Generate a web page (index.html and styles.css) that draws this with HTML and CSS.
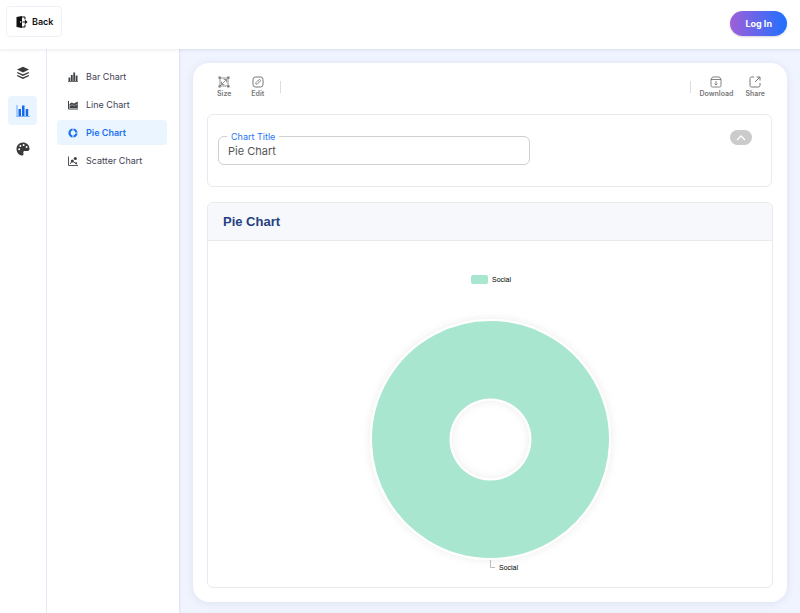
FILE: index.html
```html
<!DOCTYPE html>
<html lang="en">
<head>
    <meta charset="UTF-8">
    <meta name="viewport" content="width=device-width, initial-scale=1.0">
    <title>Pie Chart</title>
    <link rel="stylesheet" href="styles.css">
</head>
<body>
    <header class="topbar">
        <button type="button" class="back-btn">
            <svg width="12" height="12" viewBox="0 0 12 12">
                <path d="M0.500 1 L6 0 V12 L0.500 11 Z" fill="#111"/>
                <path d="M6 1 H9 V3.500 M9 8.500 V11 H6" fill="none" stroke="#111"/>
                <path d="M6.500 6 H10.500 M9 4.300 L10.700 6 L9 7.700" fill="none" stroke="#111" stroke-width="1.200"/>
                <circle cx="4.600" cy="6" r="0.700" fill="#fff"/>
            </svg>
            Back
        </button>
        <button type="button" class="login-btn">Log In</button>
    </header>

    <div class="layout">
        <nav class="rail" aria-label="Sections">
            <button type="button" class="rail-btn" aria-label="Data">
                <svg width="14" height="14" viewBox="0 0 14 14">
                    <path d="M7 0.800 L13 3.600 L7 6.400 L1 3.600 Z" fill="#3a3a3a"/>
                    <path d="M1.200 6.500 L7 9.200 L12.800 6.500 M1.200 9.500 L7 12.200 L12.800 9.500" fill="none" stroke="#3a3a3a" stroke-width="1.300"/>
                </svg>
            </button>
            <button type="button" class="rail-btn active" aria-label="Charts">
                <svg width="14" height="14" viewBox="0 0 14 14">
                    <path d="M1 1 V12.500 H14" fill="none" stroke="#7db4fb" stroke-width="1.200"/>
                    <path d="M2.500 5 H5 V12 H2.500 Z M6 1.500 H8.500 V12 H6 Z M9.700 5 H12.200 V12 H9.700 Z" fill="#1669e8"/>
                </svg>
            </button>
            <button type="button" class="rail-btn" aria-label="Theme">
                <svg width="14" height="14" viewBox="0 0 14 14">
                    <path d="M7 0.500 C3 0.500 0.500 3.500 0.500 7 C0.500 10.800 3.300 13.500 6.300 13.500 C8.200 13.500 7.300 11.500 7.300 10.300 C7.300 9.200 8.200 8.800 9.300 8.900 L11.500 9 C13 9 13.500 7.800 13.500 6.500 C13.300 3 10.500 0.500 7 0.500 Z" fill="#3a3a3a"/>
                    <circle cx="3.200" cy="7.300" r="1" fill="#fff"/>
                    <circle cx="4.400" cy="4.100" r="1" fill="#fff"/>
                    <circle cx="7.600" cy="2.900" r="1" fill="#fff"/>
                    <circle cx="10.600" cy="4.900" r="1" fill="#fff"/>
                </svg>
            </button>
        </nav>

        <nav class="menu" aria-label="Chart types">
            <a href="#bar" class="menu-item">
                <svg width="10" height="10" viewBox="0 0 10 10">
                    <path d="M0.500 5.500 H2.300 V9 H0.500 Z M2.900 3 H4.700 V9 H2.900 Z M5.300 0.500 H7.100 V9 H5.300 Z M7.700 3.500 H9.500 V9 H7.700 Z M0 9.300 H10 V10 H0 Z" fill="#3f4247"/>
                </svg>
                Bar Chart
            </a>
            <a href="#line" class="menu-item">
                <svg width="10" height="10" viewBox="0 0 10 10">
                    <path d="M0.500 1 V9 H10" fill="none" stroke="#3f4247"/>
                    <path d="M1.500 4 L3.500 2.500 L6 3.500 L9.800 1.500 V8 H1.500 Z" fill="#3f4247"/>
                    <path d="M1.500 6 L4 4.700 L6.500 5.700 L9.500 4" fill="none" stroke="#ccc" stroke-width="0.600"/>
                </svg>
                Line Chart
            </a>
            <a href="#pie" class="menu-item active" aria-current="page">
                <svg width="10" height="10" viewBox="0 0 10 10">
                    <circle cx="5" cy="5" r="3.500" fill="none" stroke="#1a73f0" stroke-width="2.200"/>
                    <path d="M5 0 V3 M5 7 V10 M7 5 H10" fill="none" stroke="#ebf5ff" stroke-width="0.900"/>
                </svg>
                Pie Chart
            </a>
            <a href="#scatter" class="menu-item">
                <svg width="10" height="10" viewBox="0 0 10 10">
                    <path d="M0.500 0.500 V9.500 H10 M2 8 L4.500 5 L8.500 8" fill="none" stroke="#3f4247" stroke-width="0.900"/>
                    <circle cx="4.300" cy="5" r="1.500" fill="#3f4247"/>
                    <circle cx="7.300" cy="2.500" r="1.600" fill="#3f4247"/>
                    <circle cx="8.200" cy="7.300" r="1" fill="#3f4247"/>
                </svg>
                Scatter Chart
            </a>
        </nav>

        <main class="workspace">
            <section class="card">
                <div class="toolbar">
                    <div class="tool-group">
                        <button type="button" class="tool">
                            <svg width="12" height="12" viewBox="0 0 12 12" fill="none" stroke="#777">
                                <path d="M2 2 H10 V10 H2 Z M3.500 8.500 L8.500 3.500 M5.700 3.500 H8.500 V6.300 M3.500 5.700 V8.500 H6.300" stroke-width="0.800"/>
                                <path d="M0.500 0.500 H2.700 V2.700 H0.500 Z M9.300 0.500 H11.500 V2.700 H9.300 Z M0.500 9.300 H2.700 V11.500 H0.500 Z M9.300 9.300 H11.500 V11.500 H9.300 Z" fill="#777" stroke="none"/>
                            </svg>
                            Size
                        </button>
                        <button type="button" class="tool">
                            <svg width="12" height="12" viewBox="0 0 12 12" fill="none" stroke="#777">
                                <rect x="1" y="1" width="10" height="10" rx="2.500"/>
                                <path d="M3.800 8.200 L4 6.500 L6.800 3.700 Q7.600 3.200 8.200 3.800 Q8.800 4.400 8.200 5.200 L5.400 8 Z M6.200 4.500 L7.500 5.800" stroke-width="0.800"/>
                            </svg>
                            Edit
                        </button>
                    </div>
                    <span class="divider"></span>
                    <span class="spacer"></span>
                    <span class="divider"></span>
                    <div class="tool-group tool-group-end">
                        <button type="button" class="tool">
                            <svg width="12" height="12" viewBox="0 0 12 12" fill="none" stroke="#777">
                                <path d="M1 3.500 L2.500 1 H9.500 L11 3.500 V9.500 Q11 11 9.500 11 H2.500 Q1 11 1 9.500 Z M1 3.500 H11" stroke-width="0.900"/>
                                <path d="M6 5 V9 M4.500 7.600 L6 9.100 L7.500 7.600" stroke-width="0.900"/>
                            </svg>
                            Download
                        </button>
                        <button type="button" class="tool">
                            <svg width="12" height="12" viewBox="0 0 12 12" fill="none" stroke="#777">
                                <path d="M5 1 H2.500 Q1 1 1 2.500 V9.500 Q1 11 2.500 11 H9.500 Q11 11 11 9.500 V7 M6 6 L11 1 M7.500 1 H11 V4.500"/>
                            </svg>
                            Share
                        </button>
                    </div>
                </div>

                <div class="settings">
                    <div class="field">
                        <label for="chart-title">Chart Title</label>
                        <input type="text" id="chart-title" value="Pie Chart">
                    </div>
                    <button type="button" class="collapse-btn" aria-label="Collapse settings">
                        <svg width="10" height="6" viewBox="0 0 10 6">
                            <path d="M1 5 L5 1 L9 5" fill="none" stroke="#fff" stroke-width="1.400"/>
                        </svg>
                    </button>
                </div>

                <div class="chart-panel">
                    <h1>Pie Chart</h1>
                    <svg class="chart" viewBox="0 0 300 346" role="img" aria-label="Pie chart with one slice, Social">
                        <defs>
                            <filter id="shade" x="-10%" y="-10%" width="120%" height="120%">
                                <feDropShadow dx="0" dy="0" stdDeviation="4" flood-color="#000" flood-opacity="0.080"/>
                            </filter>
                        </defs>
                        <rect x="131" y="34" width="17" height="9" rx="2" fill="#a8e6cf"/>
                        <text x="152" y="41">Social</text>
                        <path d="M150.500 79 a119.500 119.500 0 1 0 0.010 0 Z M150.500 158.500 a40 40 0 1 1 -0.010 0 Z" fill="#a8e6cf" fill-rule="evenodd" stroke="#fff" stroke-width="2" filter="url(#shade)"/>
                        <path d="M150.500 319 V326.500 H155" fill="none" stroke="#bbb"/>
                        <text x="159" y="329">Social</text>
                    </svg>
                </div>
            </section>
        </main>
    </div>
</body>
</html>
```

FILE: styles.css
```css
* {
    box-sizing: border-box;
}
body {
    margin: 0;
    min-height: 100vh;
    display: flex;
    flex-direction: column;
    font-family: Inter, sans-serif;
    font-size: 9px;
    color: #3f4254;
    background-color: #fff;
}
button {
    padding: 0;
    border: 0;
    background: none;
    font: inherit;
    color: inherit;
    cursor: pointer;
}
svg {
    display: block;
    flex-shrink: 0;
}

/* header */
.topbar {
    position: relative;
    display: flex;
    align-items: flex-start;
    justify-content: space-between;
    padding: 6px 13px 12px 6px;
    box-shadow: 0 1px 3px rgba(40, 50, 90, 0.1);
}
.back-btn {
    display: flex;
    align-items: center;
    gap: 4px;
    height: 31px;
    padding: 0 8px 0 9px;
    border: 1px solid #eef1f8;
    border-radius: 4px;
    font-weight: 600;
    color: #111;
}
.login-btn {
    height: 25px;
    margin-top: 5px;
    padding: 0 15px;
    border-radius: 13px;
    background: linear-gradient(90deg, #a05fd8, #1f70ff);
    box-shadow: 0 1px 2px rgba(40, 50, 90, 0.2);
    font-weight: 700;
    color: #fff;
}

.layout {
    flex: 1;
    display: flex;
}

/* icon rail */
.rail {
    display: flex;
    flex-direction: column;
    gap: 9px;
    padding: 9px 9px 9px 8px;
    border-right: 1px solid #e3e9f7;
}
.rail-btn {
    display: flex;
    align-items: center;
    justify-content: center;
    width: 29px;
    height: 29px;
    border-radius: 4px;
}
.rail-btn.active {
    background-color: #eaf4ff;
}

/* chart type list */
.menu {
    display: flex;
    flex-direction: column;
    gap: 3px;
    width: 132px;
    padding: 15px 12px 14px 10px;
}
.menu-item {
    display: flex;
    align-items: center;
    gap: 8px;
    height: 25px;
    padding-left: 11px;
    border-radius: 4px;
    color: #3f4254;
    text-decoration: none;
}
.menu-item.active {
    background-color: #ebf5ff;
    color: #1a73f0;
    font-weight: 600;
}

/* main area */
.workspace {
    flex: 1;
    min-width: 0;
    padding: 14px 13px 11px 14px;
    background-color: #f0f4fe;
    box-shadow: inset 1px 0 2px rgba(60, 70, 130, 0.1);
}
.card {
    height: 100%;
    padding: 11px 14px 14px;
    border-radius: 16px;
    background-color: #fff;
    box-shadow: 0 1px 8px rgba(60, 70, 130, 0.1);
}
.toolbar {
    display: flex;
    align-items: center;
    height: 26px;
    padding: 0 8px 0 10px;
}
.tool-group {
    display: flex;
    gap: 20px;
    margin-right: 16px;
}
.tool-group-end {
    gap: 12px;
    margin: 0 0 0 8px;
}
.tool {
    display: flex;
    flex-direction: column;
    align-items: center;
    gap: 1px;
    font-size: 7px;
    line-height: 9px;
    font-weight: 600;
    color: #777;
}
.divider {
    width: 1px;
    height: 12px;
    background-color: #dcdce6;
}
.spacer {
    flex: 1;
}

.settings {
    display: flex;
    align-items: flex-start;
    justify-content: space-between;
    min-height: 73px;
    margin: 14px 1px 15px 0;
    padding: 15px 19px 15px 10px;
    border: 1px solid #e8eaec;
    border-radius: 6px;
}
.field {
    position: relative;
    flex: 0 1 312px;
    margin-top: 6px;
}
.field label {
    position: absolute;
    top: -5px;
    left: 9px;
    padding: 0 4px;
    background-color: #fff;
    font-size: 9px;
    line-height: 12px;
    color: #2575f5;
}
.field input {
    display: block;
    width: 100%;
    height: 29px;
    padding: 0 9px;
    border: 1px solid #cfcfcf;
    border-radius: 6px;
    background: none;
    font-family: inherit;
    font-size: 11px;
    color: #555;
}
.collapse-btn {
    display: flex;
    align-items: center;
    justify-content: center;
    width: 22px;
    height: 15px;
    border-radius: 8px;
    background-color: #cbcbcb;
}

.chart-panel {
    border: 1px solid #e8eaec;
    border-radius: 6px;
    overflow: hidden;
}
.chart-panel h1 {
    margin: 0;
    padding: 0 15px;
    border-bottom: 1px solid #e8eaec;
    background-color: #f6f8fb;
    font-family: "Liberation Sans", Arial, sans-serif;
    font-size: 13px;
    line-height: 37px;
    font-weight: 700;
    color: #27407f;
}
.chart {
    width: 100%;
    height: 346px;
    font-family: "Liberation Sans", Arial, sans-serif;
    font-size: 7px;
    fill: #000;
}
```
